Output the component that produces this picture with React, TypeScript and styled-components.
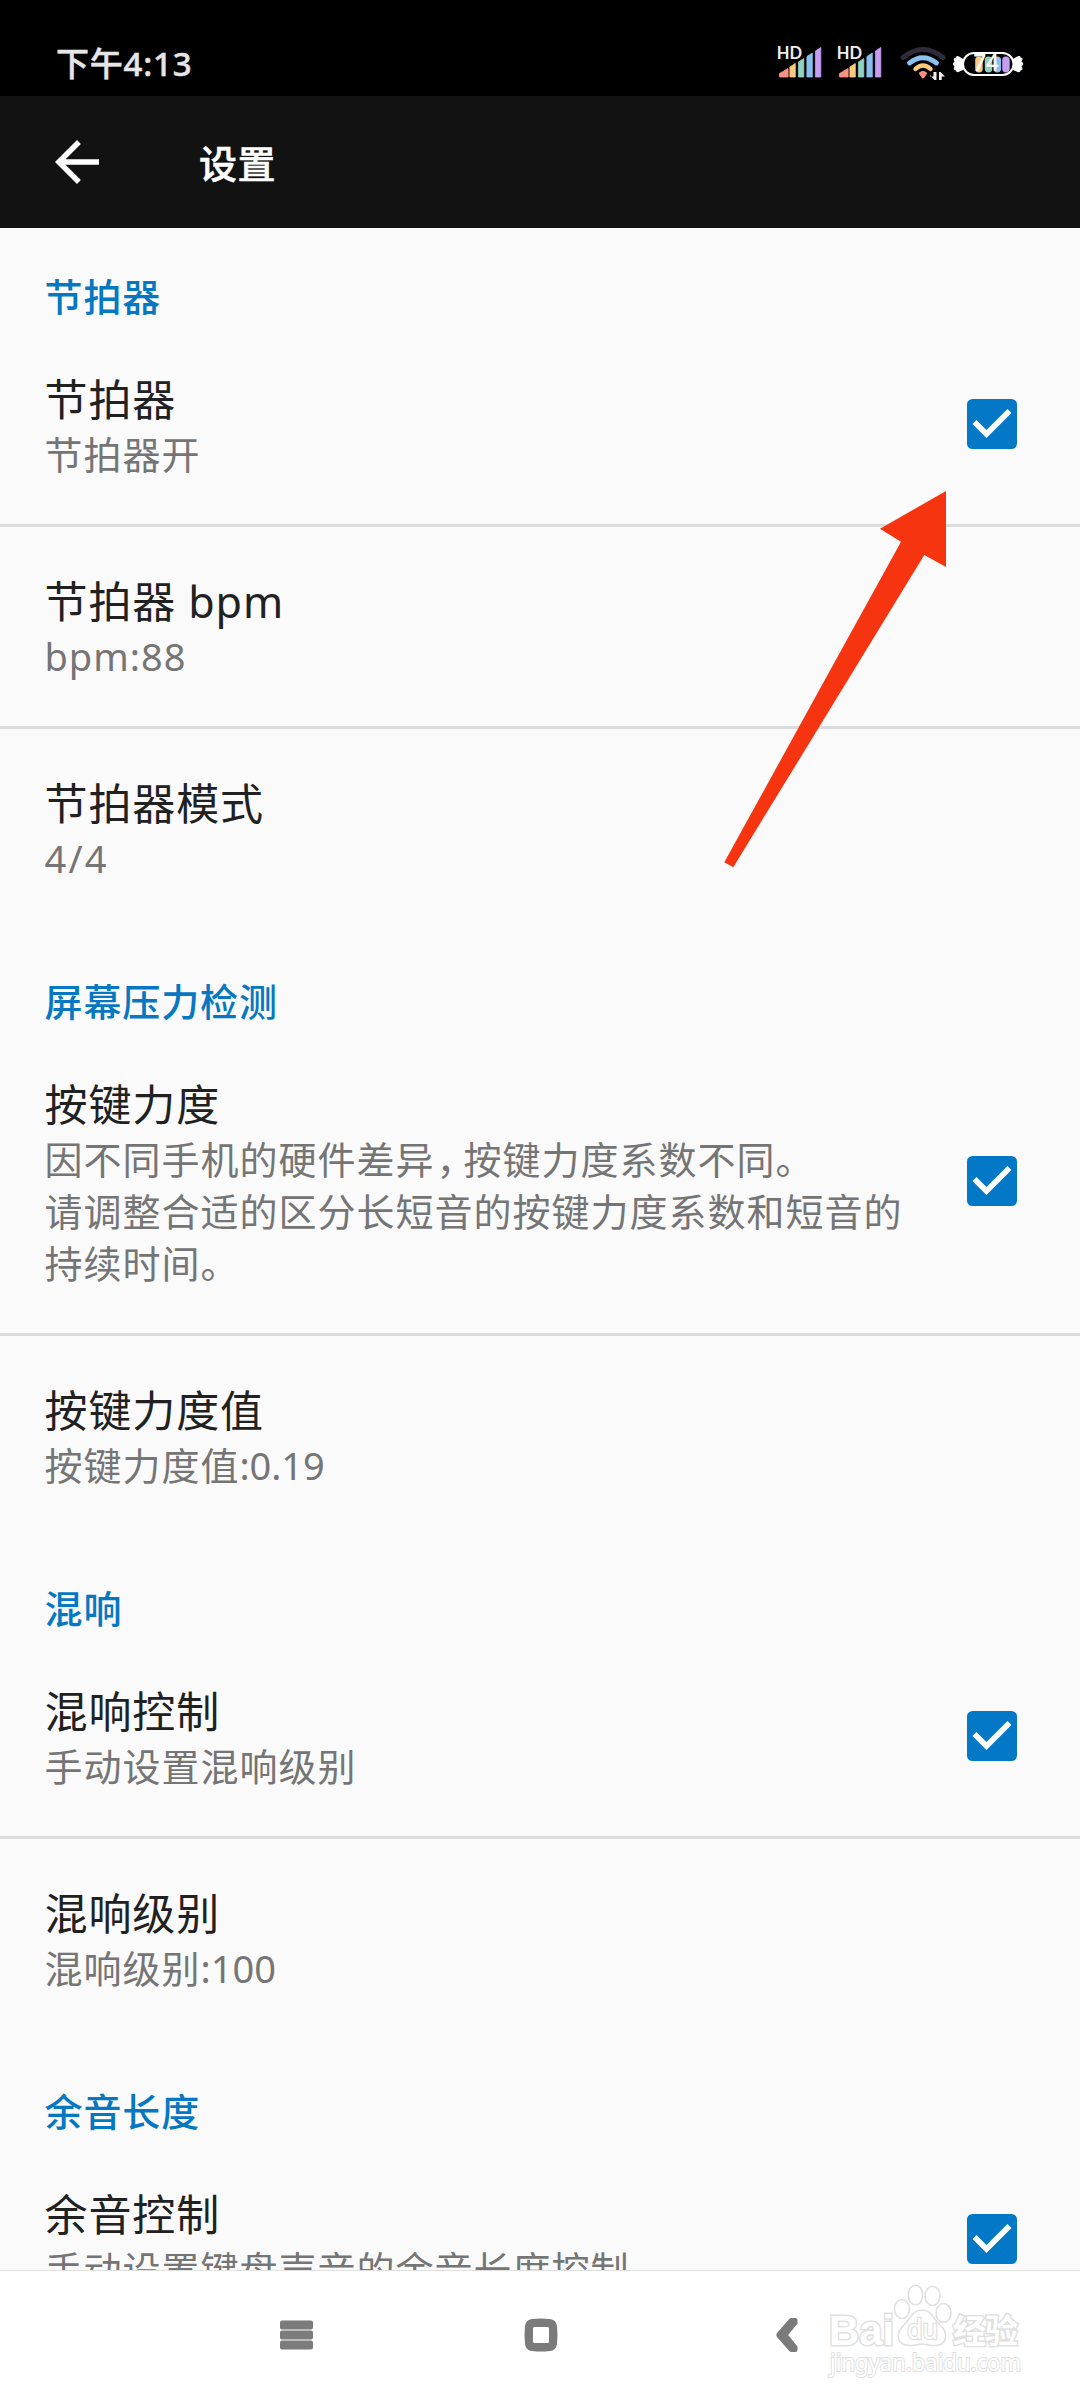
import React, { Fragment } from 'react';
import styled, { createGlobalStyle } from 'styled-components';

const GlobalStyle = createGlobalStyle`
  * { box-sizing: border-box; }
  body {
    margin: 0;
    background: #fafafa;
    font-family: 'Noto Sans', 'Noto Sans CJK SC', sans-serif;
  }
`;

const Screen = styled.div`
  position: relative;
  width: 1080px;
  height: 2400px;
  display: flex;
  flex-direction: column;
  background: #fafafa;
  overflow: hidden;
`;

const StatusBar = styled.header`
  height: 96px;
  flex: none;
  display: flex;
  justify-content: space-between;
  align-items: flex-start;
  padding: 42px 52px 0 56px;
  background: #000;
`;

const Clock = styled.time`
  font-size: 33px;
  line-height: 44px;
  font-weight: 500;
  letter-spacing: 0.8px;
  color: #e6e6e6;
  -webkit-text-stroke: 0.5px #e6e6e6;
`;

const StatusIcons = styled.svg`
  display: block;
  width: 256px;
  height: 40px;
`;

const AppBar = styled.nav`
  height: 132px;
  flex: none;
  display: flex;
  align-items: center;
  gap: 89px;
  padding-left: 44px;
  background: #121212;
`;

const BackIcon = styled.svg`
  width: 66px;
  height: 66px;
  fill: #fff;
`;

const PageTitle = styled.h1`
  margin: 0;
  padding-top: 2px;
  font-size: 38px;
  line-height: 52px;
  font-weight: 500;
  letter-spacing: 0.5px;
  color: #fff;
  -webkit-text-stroke: 0.5px #fff;
`;

const Content = styled.main`
  flex: 1;
  min-height: 0;
  overflow: hidden;
`;

const Section = styled.section`
  & + & { margin-top: 5px; }
`;

const SectionTitle = styled.h2`
  margin: 0;
  height: 97px;
  padding: 42px 44.5px 0;
  font-size: 38px;
  line-height: 52px;
  font-weight: 500;
  letter-spacing: 0.9px;
  color: #0678c2;
`;

const Row = styled.div`
  display: flex;
  align-items: center;
  justify-content: space-between;
  padding: 44px 63px 44px 44.5px;
`;

const RowText = styled.div`
  width: 870px;
`;

const RowTitle = styled.div`
  padding-top: 2px;
  font-size: 43px;
  line-height: 57px;
  letter-spacing: 0.9px;
  color: #212121;
`;

const Summary = styled.div`
  font-size: 38px;
  line-height: 52px;
  letter-spacing: 1px;
  color: #757575;
  white-space: pre;
`;

const Comma = styled.span`
  padding-left: 2px;
  letter-spacing: -11px;
`;

const Value = styled.span<{ $tracking: number }>`
  letter-spacing: ${(p) => p.$tracking}px;
`;

const Divider = styled.hr`
  margin: 0;
  border: 0;
  height: 3px;
  background: #dbdbdb;
`;

const CheckBox = styled.span`
  flex: none;
  width: 50px;
  height: 50px;
  margin-bottom: 1px;
  border-radius: 5.5px;
  background: #0278c6;

  svg { display: block; fill: #fff; }
`;

const NavBar = styled.footer`
  height: 130px;
  flex: none;
  display: flex;
  align-items: center;
  background: #fff;
  border-top: 1px solid #e1e1e1;
  padding: 0 0 2px 280px;
`;

const NavIcon = styled.svg<{ $w: number; $gap: number }>`
  display: block;
  width: ${(p) => p.$w}px;
  height: 34px;
  margin-right: ${(p) => p.$gap}px;
  fill: #7b7b7b;
`;

const Pointer = styled.svg`
  position: absolute;
  left: 724px;
  top: 491px;
  width: 223px;
  height: 377px;
  fill: #f63410;
`;

const Watermark = styled.svg`
  position: absolute;
  left: 820px;
  top: 2276px;
  width: 210px;
  height: 110px;
`;

type Item = { title: string; summary: React.ReactNode; checked?: boolean };

const sections: { name: string; items: Item[] }[] = [
  {
    name: '节拍器',
    items: [
      { title: '节拍器', summary: '节拍器开', checked: true },
      { title: '节拍器 bpm', summary: 'bpm:88' },
      { title: '节拍器模式', summary: <Value $tracking={2.2}>4/4</Value> },
    ],
  },
  {
    name: '屏幕压力检测',
    items: [
      {
        title: '按键力度',
        summary: (
          <>
            因不同手机的硬件差异<Comma>，</Comma>按键力度系数不同。{'\n'}
            请调整合适的区分长短音的按键力度系数和短音的{'\n'}
            持续时间。
          </>
        ),
        checked: true,
      },
      { title: '按键力度值', summary: <>按键力度值<Value $tracking={-0.1}>:0.19</Value></> },
    ],
  },
  {
    name: '混响',
    items: [
      { title: '混响控制', summary: '手动设置混响级别', checked: true },
      { title: '混响级别', summary: <>混响级别<Value $tracking={0}>:100</Value></> },
    ],
  },
  {
    name: '余音长度',
    items: [{ title: '余音控制', summary: '手动设置键盘声音的余音长度控制', checked: true }],
  },
];

const palette = ['#fb9385', '#fbca80', '#93d1c0', '#88bff0', '#c69df0'];

function Signal({ x }: { x: number }) {
  const tops = [26.5, 21.5, 16.5, 11, 5.5];
  return (
    <g transform={`translate(${x} 0)`}>
      {tops.map((top, i) => {
        const start = i === 0 ? 7.5 : 9.4 + i * 8.5;
        const width = i === 0 ? 8.6 : 5.4;
        const rise = i === 0 ? 5 : 3.5;
        return (
          <path
            key={i}
            d={`M${start} ${top + rise}L${start + width} ${top}V35H${start}Z`}
            fill={palette[i]}
            stroke={palette[i]}
            strokeWidth="0.8"
            strokeLinejoin="round"
          />
        );
      })}
      <text x="4.8" y="17" fontFamily="Lato, sans-serif" fontWeight="700" fontSize="16.5" fill="#eee" stroke="#000" strokeWidth="2" paintOrder="stroke">
        HD
      </text>
    </g>
  );
}

function Wifi() {
  return (
    <g fill="none" strokeLinecap="round">
      <path d="M131 15.500Q151 -0.500 171 15.500" stroke="#302b3b" strokeWidth="5" />
      <path d="M137.500 21Q151 10.500 164.500 21" stroke="#8cc1f0" strokeWidth="4.800" />
      <path d="M143.500 27Q151 20 158.500 27" stroke="#fbca80" strokeWidth="4.400" />
      <path d="M148.500 31.500Q151 29.500 153.500 31.500L151 35Z" fill="#fb8d80" stroke="#fb8d80" strokeWidth="3" strokeLinejoin="round" />
      <path d="M158 33L162.500 38H164.500V30H161.500V34.500H158ZM167 38V30H168.500L173 34.500H169.700V38Z" fill="#f2f2f2" />
    </g>
  );
}

function Battery() {
  return (
    <g>
      <path d="M191 17Q184 12 184 15.500Q180.500 16 182.500 19.500Q179.500 22 182.500 24.500Q180.500 28 184 28.500Q184 32 191 28Z" fill="#fff" />
      <path d="M241 17Q248.500 12 248.500 15.500Q252 16 249.500 19.500Q253 22 249.500 24.500Q252 28 248.500 28.500Q248.500 32 241 28Z" fill="#fff" />
      <rect x="191" y="11" width="50.500" height="22" rx="11" fill="#000" stroke="#fff" strokeWidth="2" />
      {[203.2, 212.8, 221.600, 230.200].map((x, i) => (
        <rect key={x} x={x} y="14.500" width="7.500" height="16" rx="3.700" fill={palette[i + 1]} />
      ))}
      <text x="201.300" y="29" fontFamily="Lato, sans-serif" fontWeight="700" fontSize="22" fill="#f6f6f0">
        74
      </text>
    </g>
  );
}

function StatusGlyphs() {
  return (
    <StatusIcons viewBox="0 0 256 40">
      <Signal x={0} />
      <Signal x={60} />
      <Wifi />
      <Battery />
    </StatusIcons>
  );
}

function SettingRow({ item }: { item: Item }) {
  return (
    <Row>
      <RowText>
        <RowTitle>{item.title}</RowTitle>
        <Summary>{item.summary}</Summary>
      </RowText>
      {item.checked && (
        <CheckBox role="checkbox" aria-checked="true">
          <svg width="50" height="50" viewBox="3 3 18 18">
            <path d="M10 17l-5-5 1.410-1.410L10 14.170l7.590-7.590L19 8z" />
          </svg>
        </CheckBox>
      )}
    </Row>
  );
}

function BaiduMark() {
  return (
    <Watermark viewBox="0 0 210 110">
      <g fill="#fff" stroke="#e0e0e0" strokeWidth="1.600">
        <g strokeWidth="3" paintOrder="stroke" fontFamily="'Liberation Sans', Arial, sans-serif" fontWeight="700">
          <text x="9" y="69" fontSize="42" textLength="65" lengthAdjust="spacingAndGlyphs">Bai</text>
          <text x="133" y="67" fontSize="33" fontFamily="'Noto Sans CJK SC', sans-serif" textLength="65">经验</text>
        </g>
        <ellipse cx="82" cy="33" rx="7.500" ry="9.500" />
        <ellipse cx="95.500" cy="19" rx="7.200" ry="9.800" />
        <ellipse cx="112.500" cy="20" rx="7.500" ry="9.500" />
        <ellipse cx="123.500" cy="37" rx="7.500" ry="9.500" />
        <path d="M102 34C112 34 113 43 120 49C128 56 128 69 116 69.500C109 70 107 68 102 68C97 68 95 70 89 69.500C76 69 76 57 83 50C91 43 92 34 102 34Z" />
        <text x="87" y="63" fontSize="27" fontFamily="'Noto Sans', sans-serif" strokeWidth="2.600" paintOrder="stroke" textLength="31" lengthAdjust="spacingAndGlyphs">du</text>
        <text x="10" y="95" fontSize="23" fontFamily="'Noto Sans', sans-serif" strokeWidth="2" paintOrder="stroke" textLength="191" lengthAdjust="spacingAndGlyphs">jingyan.baidu.com</text>
      </g>
    </Watermark>
  );
}

export default function App() {
  return (
    <>
      <GlobalStyle />
      <Screen>
        <StatusBar>
          <Clock>下午4:13</Clock>
          <StatusGlyphs />
        </StatusBar>
        <AppBar>
          <BackIcon viewBox="0 0 24 24">
            <path d="M20 11H7.830l5.590-5.590L12 4l-8 8 8 8 1.410-1.410L7.830 13H20v-2z" />
          </BackIcon>
          <PageTitle>设置</PageTitle>
        </AppBar>
        <Content>
          {sections.map((section) => (
            <Section key={section.name}>
              <SectionTitle>{section.name}</SectionTitle>
              {section.items.map((item, i) => (
                <Fragment key={item.title}>
                  {i > 0 && <Divider />}
                  <SettingRow item={item} />
                </Fragment>
              ))}
            </Section>
          ))}
        </Content>
        <NavBar>
          <NavIcon $w={33} $gap={211} viewBox="0 0 33 34">
            <rect y="2.500" width="33" height="9" rx="2" />
            <rect y="12.500" width="33" height="9" rx="2" />
            <rect y="22.500" width="33" height="9" rx="2" />
          </NavIcon>
          <NavIcon $w={34} $gap={218} viewBox="0 0 34 34">
            <path fillRule="evenodd" d="M8 1Q17 0 26 1Q32 1.500 33 8Q34 17 33 26Q32 32.500 26 33Q17 34 8 33Q2 32.500 1 26Q0 17 1 8Q2 1.500 8 1ZM10.500 9Q9 9 9 10.500V23.500Q9 25 10.500 25H23.500Q25 25 25 23.500V10.500Q25 9 23.500 9Z" />
          </NavIcon>
          <NavIcon $w={22} $gap={0} viewBox="0 0 22 34">
            <path d="M13 1.200Q14.200 0 15.500 0H19.500Q21.500 0 21.500 2V5.500L12.200 17L21.500 28.500V32Q21.500 34 19.500 34H15.500Q14.200 34 13 32.800L1 19Q-0.400 17 1 15Z" />
          </NavIcon>
        </NavBar>
        <Pointer viewBox="0 0 223 377">
          <polygon points="222,0 156,37.700 177,50.700 0.300,371.300 9.300,376.300 200.300,64 222,76" />
        </Pointer>
        <BaiduMark />
      </Screen>
    </>
  );
}
